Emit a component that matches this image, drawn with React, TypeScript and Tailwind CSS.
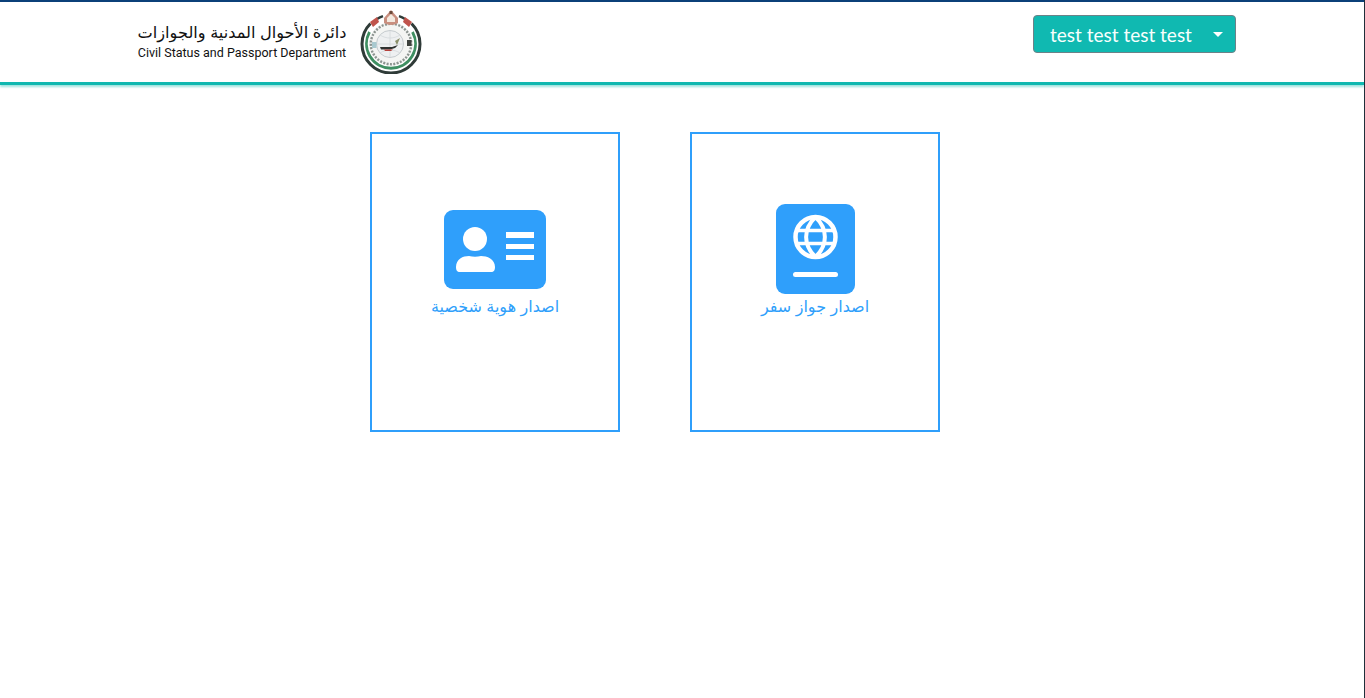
const arabicFont = "font-['Liberation_Sans','DejaVu_Sans',sans-serif]"

function Emblem() {
  return (
    <svg width="62" height="64" viewBox="0 0 62 64" className="shrink-0">
      <path d="M10.5 13.5A29 29 0 1 0 51.5 13.5" fill="none" stroke="#2f3b38" strokeWidth="3" />
      <path d="M17 9A29 29 0 0 1 23 6.2M45 9A29 29 0 0 0 39 6.2" fill="none" stroke="#2f3b38" strokeWidth="2.4" />
      <path d="M9.5 22A24.5 24.5 0 1 0 52.5 22" fill="none" stroke="#3f8f62" strokeWidth="2.8" />
      <circle cx="31" cy="34" r="22" fill="#f4f5f3" />
      <circle cx="31" cy="34" r="20.2" fill="none" stroke="#8c9490" strokeWidth="2.4" strokeDasharray="2 1.4" />
      <circle cx="30" cy="34" r="13.5" fill="#eef0f1" stroke="#c5cbce" strokeWidth="1" />
      <path d="M30 21v26M17 34h26M20 25c6 4 14 4 20 0M20 43c6-4 14-4 20 0" fill="none" stroke="#d3d8db" strokeWidth="0.8" />
      <path d="M20 37h12l6-2-3 3-5 1.5H21z" fill="#2f3230" />
      <path d="M24 39.5h9l-2 1.4h-6z" fill="#b5423c" />
      <path d="M35 31l5-3-3 7z" fill="#8a8f6a" />
      <rect x="12" y="32" width="4.5" height="6" fill="#a9c9cf" />
      <rect x="47" y="30" width="4.5" height="6" fill="#3c403d" />
      <path d="M10 12l7-5 2 5-6 5z" fill="#c0544c" />
      <path d="M52 12l-7-5-2 5 6 5z" fill="#c0544c" />
      <path d="M24 8l7-8 7 8v5q-7 4-14 0z" fill="#c98f7f" />
      <path d="M27 8l4-4 4 4v4h-8z" fill="#f3e9df" />
      <rect x="29.5" y="1" width="3" height="3" fill="#6b4a3a" />
    </svg>
  )
}

function IdCardIcon() {
  return (
    <svg width="102" height="79" viewBox="0 0 102 79">
      <rect width="102" height="79" rx="9" fill="#2f9ffb" />
      <circle cx="31" cy="29" r="12" fill="#fff" />
      <path d="M12 57c0-8 7-11 13-11 4 1 8 1 12 0 6 0 14 3 14 11 0 3-1 5-4 5H16c-3 0-4-2-4-5z" fill="#fff" />
      <rect x="62" y="22" width="28" height="6" fill="#fff" />
      <rect x="62" y="34" width="28" height="5" fill="#fff" />
      <rect x="62" y="45" width="28" height="5" fill="#fff" />
    </svg>
  )
}

function PassportIcon() {
  return (
    <svg width="79" height="90" viewBox="0 0 79 90">
      <rect width="79" height="90" rx="9" fill="#2f9ffb" />
      <g fill="none" stroke="#fff" strokeWidth="4.5">
        <circle cx="39.5" cy="33" r="20" />
        <path d="M39.5 13C27 25 27 41 39.5 53M39.5 13C52 25 52 41 39.5 53" strokeWidth="4" />
        <path d="M20 26.5h39M20 39.5h39" strokeWidth="3.6" />
      </g>
      <rect x="17" y="68" width="45" height="5" rx="2.5" fill="#fff" />
    </svg>
  )
}

function ServiceCard({ label, icon }: { label: string; icon: React.ReactNode }) {
  return (
    <a className="flex h-[300px] w-[250px] flex-col items-center border-2 border-[#2f9ffb] pt-[70px]">
      <div className="flex h-[90px] items-start">{icon}</div>
      <span dir="rtl" className={`${arabicFont} mt-[3px] text-[16px] leading-[20px] text-[#2f9ffb]`}>
        {label}
      </span>
    </a>
  )
}

export default function App() {
  return (
    <div className="h-[698px] overflow-hidden border-r border-r-[#1f2f3a] bg-white">
      <header className="flex h-[85px] items-start justify-between border-t-2 border-b-[3px] border-t-[#0b4079] border-b-[#10b8b0] pl-[137px] pr-[128px] shadow-[0_2px_2px_rgba(16,184,176,0.4)]">
        <div className="mt-[8px] flex items-center gap-[13px]">
          <div className="flex w-[210px] flex-col items-center pb-[2px]">
            <span dir="rtl" className={`${arabicFont} text-[16.2px] leading-[22px] font-medium whitespace-nowrap text-[#111]`}>
              دائرة الأحوال المدنية والجوازات
            </span>
            <span className="mt-[2px] font-['Roboto',sans-serif] text-[12.5px] leading-[16px] whitespace-nowrap text-[#111]">
              Civil Status and Passport Department
            </span>
          </div>
          <Emblem />
        </div>
        <button
          type="button"
          className="mt-[13px] flex h-[38px] w-[203px] items-center justify-between rounded-[4px] border border-[#6c8288] bg-[#10b9b1] pt-[2px] pr-[12px] pl-[16px] font-['Lato',sans-serif] text-[19px] text-[#f8fffd]"
        >
          <span>test test test test</span>
          <span className="mb-[2px] h-0 w-0 border-x-[5px] border-t-[5px] border-x-transparent border-t-white" />
        </button>
      </header>
      <main className="mt-[47px] flex gap-[70px] pl-[370px]">
        <ServiceCard label="اصدار هوية شخصية" icon={<div className="pt-[6px]"><IdCardIcon /></div>} />
        <ServiceCard label="اصدار جواز سفر" icon={<PassportIcon />} />
      </main>
    </div>
  )
}
